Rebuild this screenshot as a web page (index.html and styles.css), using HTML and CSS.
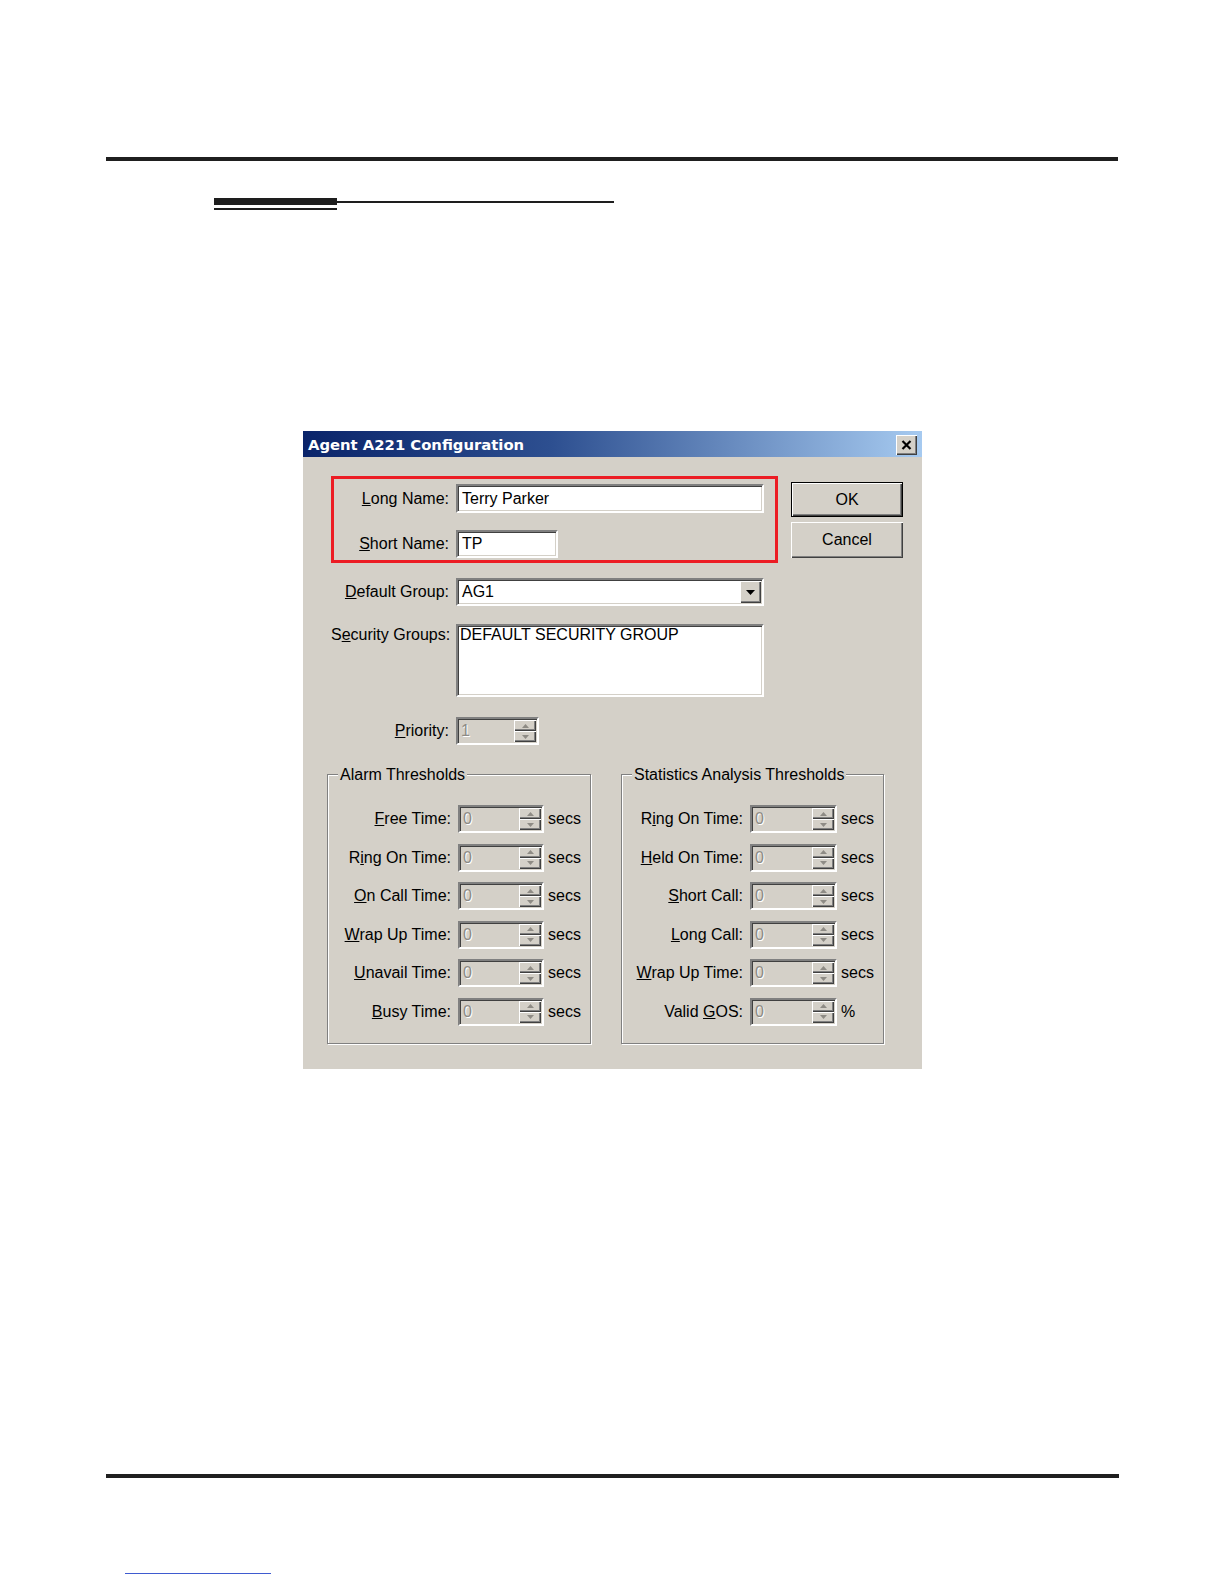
FILE: index.html
```html
<!DOCTYPE html>
<html>
<head>
<meta charset="utf-8">
<title>Agent A221 Configuration</title>
<link rel="stylesheet" href="styles.css">
</head>
<body>
<div class="page">
  <div class="rule-top"></div>
  <div class="heading-rule"><div class="hr-left"></div><div class="hr-right"></div></div>

  <div class="dialog">
    <div class="titlebar">
      <span class="title">Agent A221 Configuration</span>
      <span class="close"><svg width="11" height="10" viewBox="0 0 11 10"><path d="M1.5 1 L9.5 9 M9.5 1 L1.5 9" stroke="#000" stroke-width="2.2" fill="none"/></svg></span>
    </div>
    <div class="dlg-body">
      <div class="top-row">
        <div class="red-box">
          <div class="frow in-red"><label><u>L</u>ong Name:</label><div class="edit long">Terry Parker</div></div>
          <div class="frow in-red r2"><label><u>S</u>hort Name:</label><div class="edit short">TP</div></div>
        </div>
        <div class="btns">
          <div class="btn default">OK</div>
          <div class="btn">Cancel</div>
        </div>
      </div>

      <div class="frow out r-default"><label><u>D</u>efault Group:</label>
        <div class="combo"><span class="combo-val">AG1</span><span class="combo-btn"><svg width="9" height="5" viewBox="0 0 9 5"><polygon points="0,0 9,0 4.5,5" fill="#000"/></svg></span></div>
      </div>

      <div class="frow out r-sec"><label>S<u>e</u>curity Groups:</label>
        <div class="listbox">DEFAULT SECURITY GROUP</div>
      </div>

      <div class="frow out r-pri"><label><u>P</u>riority:</label>
        <div class="spin pri"><span class="sv">1</span><span class="sb"><span class="sbtn"><svg width="7" height="4" viewBox="0 0 7 4"><polygon points="0,4 3.5,0 7,4"/></svg></span><span class="sbtn"><svg width="7" height="4" viewBox="0 0 7 4"><polygon points="0,0 7,0 3.5,4"/></svg></span></span></div>
      </div>

      <div class="groups">
        <div class="group alarm">
          <span class="legend">Alarm Thresholds</span>
          <div class="grows">
            <label><u>F</u>ree Time:</label>
            <div class="spin"><span class="sv">0</span><span class="sb"><span class="sbtn"><svg width="7" height="4" viewBox="0 0 7 4"><polygon points="0,4 3.5,0 7,4"/></svg></span><span class="sbtn"><svg width="7" height="4" viewBox="0 0 7 4"><polygon points="0,0 7,0 3.5,4"/></svg></span></span></div>
            <span class="unit">secs</span>

            <label>R<u>i</u>ng On Time:</label>
            <div class="spin"><span class="sv">0</span><span class="sb"><span class="sbtn"><svg width="7" height="4" viewBox="0 0 7 4"><polygon points="0,4 3.5,0 7,4"/></svg></span><span class="sbtn"><svg width="7" height="4" viewBox="0 0 7 4"><polygon points="0,0 7,0 3.5,4"/></svg></span></span></div>
            <span class="unit">secs</span>

            <label><u>O</u>n Call Time:</label>
            <div class="spin"><span class="sv">0</span><span class="sb"><span class="sbtn"><svg width="7" height="4" viewBox="0 0 7 4"><polygon points="0,4 3.5,0 7,4"/></svg></span><span class="sbtn"><svg width="7" height="4" viewBox="0 0 7 4"><polygon points="0,0 7,0 3.5,4"/></svg></span></span></div>
            <span class="unit">secs</span>

            <label><u>W</u>rap Up Time:</label>
            <div class="spin"><span class="sv">0</span><span class="sb"><span class="sbtn"><svg width="7" height="4" viewBox="0 0 7 4"><polygon points="0,4 3.5,0 7,4"/></svg></span><span class="sbtn"><svg width="7" height="4" viewBox="0 0 7 4"><polygon points="0,0 7,0 3.5,4"/></svg></span></span></div>
            <span class="unit">secs</span>

            <label><u>U</u>navail Time:</label>
            <div class="spin"><span class="sv">0</span><span class="sb"><span class="sbtn"><svg width="7" height="4" viewBox="0 0 7 4"><polygon points="0,4 3.5,0 7,4"/></svg></span><span class="sbtn"><svg width="7" height="4" viewBox="0 0 7 4"><polygon points="0,0 7,0 3.5,4"/></svg></span></span></div>
            <span class="unit">secs</span>

            <label><u>B</u>usy Time:</label>
            <div class="spin"><span class="sv">0</span><span class="sb"><span class="sbtn"><svg width="7" height="4" viewBox="0 0 7 4"><polygon points="0,4 3.5,0 7,4"/></svg></span><span class="sbtn"><svg width="7" height="4" viewBox="0 0 7 4"><polygon points="0,0 7,0 3.5,4"/></svg></span></span></div>
            <span class="unit">secs</span>
          </div>
        </div>

        <div class="group stats">
          <span class="legend">Statistics Analysis Thresholds</span>
          <div class="grows">
            <label>R<u>i</u>ng On Time:</label>
            <div class="spin"><span class="sv">0</span><span class="sb"><span class="sbtn"><svg width="7" height="4" viewBox="0 0 7 4"><polygon points="0,4 3.5,0 7,4"/></svg></span><span class="sbtn"><svg width="7" height="4" viewBox="0 0 7 4"><polygon points="0,0 7,0 3.5,4"/></svg></span></span></div>
            <span class="unit">secs</span>

            <label><u>H</u>eld On Time:</label>
            <div class="spin"><span class="sv">0</span><span class="sb"><span class="sbtn"><svg width="7" height="4" viewBox="0 0 7 4"><polygon points="0,4 3.5,0 7,4"/></svg></span><span class="sbtn"><svg width="7" height="4" viewBox="0 0 7 4"><polygon points="0,0 7,0 3.5,4"/></svg></span></span></div>
            <span class="unit">secs</span>

            <label><u>S</u>hort Call:</label>
            <div class="spin"><span class="sv">0</span><span class="sb"><span class="sbtn"><svg width="7" height="4" viewBox="0 0 7 4"><polygon points="0,4 3.5,0 7,4"/></svg></span><span class="sbtn"><svg width="7" height="4" viewBox="0 0 7 4"><polygon points="0,0 7,0 3.5,4"/></svg></span></span></div>
            <span class="unit">secs</span>

            <label><u>L</u>ong Call:</label>
            <div class="spin"><span class="sv">0</span><span class="sb"><span class="sbtn"><svg width="7" height="4" viewBox="0 0 7 4"><polygon points="0,4 3.5,0 7,4"/></svg></span><span class="sbtn"><svg width="7" height="4" viewBox="0 0 7 4"><polygon points="0,0 7,0 3.5,4"/></svg></span></span></div>
            <span class="unit">secs</span>

            <label><u>W</u>rap Up Time:</label>
            <div class="spin"><span class="sv">0</span><span class="sb"><span class="sbtn"><svg width="7" height="4" viewBox="0 0 7 4"><polygon points="0,4 3.5,0 7,4"/></svg></span><span class="sbtn"><svg width="7" height="4" viewBox="0 0 7 4"><polygon points="0,0 7,0 3.5,4"/></svg></span></span></div>
            <span class="unit">secs</span>

            <label>Valid <u>G</u>OS:</label>
            <div class="spin"><span class="sv">0</span><span class="sb"><span class="sbtn"><svg width="7" height="4" viewBox="0 0 7 4"><polygon points="0,4 3.5,0 7,4"/></svg></span><span class="sbtn"><svg width="7" height="4" viewBox="0 0 7 4"><polygon points="0,0 7,0 3.5,4"/></svg></span></span></div>
            <span class="unit">%</span>
          </div>
        </div>
      </div>
    </div>
  </div>

  <div class="rule-bottom"></div>
  <div class="link-line"></div>
</div>
</body>
</html>
```

FILE: styles.css
```css
html, body {
  margin: 0;
  padding: 0;
  background: #fff;
}

body {
  font-family: "Liberation Sans", Arial, sans-serif;
  font-size: 16px;
  color: #000;
}

.page {
  width: 1224px;
  height: 1584px;
  overflow: hidden;
}

.rule-top {
  margin: 157px 0 0 106px;
  width: 1012px;
  height: 4px;
  background: #1f1f1f;
}

.heading-rule {
  display: flex;
  align-items: flex-start;
  margin: 37px 0 0 214px;
}

.hr-left {
  width: 123px;
  height: 12px;
  background: linear-gradient(#1e1e1e 0 7px, transparent 7px 10px, #1e1e1e 10px 12px);
}

.hr-right {
  width: 277px;
  height: 2px;
  margin-top: 3px;
  background: #1e1e1e;
}

/* dialog */
.dialog {
  margin: 221px 0 0 303px;
  width: 619px;
  height: 638px;
  background: #d4d0c8;
  overflow: hidden;
}

.titlebar {
  height: 26px;
  display: flex;
  align-items: center;
  justify-content: space-between;
  padding: 0 5px;
  background: linear-gradient(to right, #0a246a 0%, #2d4f90 40%, #a6caf0 100%);
}

.title {
  color: #fff;
  font-family: "DejaVu Sans", Verdana, sans-serif;
  font-weight: bold;
  font-size: 14.8px;
}

.close {
  align-self: flex-start;
  margin-top: 4px;
  width: 21px;
  height: 20px;
  box-sizing: border-box;
  background: #d4d0c8;
  box-shadow: inset 1px 1px 0 #fff, inset -1px -1px 0 #404040, inset -2px -2px 0 #808080;
  display: flex;
  align-items: center;
  justify-content: center;
}

.dlg-body {
  padding: 19px 0 0 28px;
}

.top-row {
  display: flex;
  align-items: flex-start;
}

.red-box {
  width: 447px;
  box-sizing: border-box;
  border: 3px solid #ec1c24;
  padding: 5px 11px 2px 0;
}

.frow {
  display: flex;
  align-items: center;
}

.frow label,
.grows label {
  text-align: right;
  white-space: nowrap;
  line-height: 18px;
}

.frow label {
  flex: none;
  margin-right: 7px;
}

.in-red label { width: 115px; }
.out label { width: 118px; }

.r2 { margin-top: 17px; }

.edit {
  box-sizing: border-box;
  background: #fff;
  border: 2px solid;
  border-color: #808080 #fff #fff #808080;
  box-shadow: inset 1px 1px 0 #404040, inset -1px -1px 0 #d4d0c8;
  padding: 0 4px;
  display: flex;
  align-items: center;
  white-space: nowrap;
}

.long { width: 308px; height: 29px; }
.short { width: 102px; height: 28px; }

.btns {
  margin: 6px 0 0 13px;
  display: flex;
  flex-direction: column;
  gap: 5px;
}

.btn {
  width: 112px;
  height: 36px;
  box-sizing: border-box;
  background: #d4d0c8;
  display: flex;
  align-items: center;
  justify-content: center;
  box-shadow: inset 1px 1px 0 #fff, inset -1px -1px 0 #404040, inset -2px -2px 0 #808080;
}

.btn.default {
  height: 35px;
  border: 1px solid #000;
}

.r-default { margin-top: 15px; }

.combo {
  width: 308px;
  height: 28px;
  box-sizing: border-box;
  background: #fff;
  border: 2px solid;
  border-color: #808080 #fff #fff #808080;
  box-shadow: inset 1px 1px 0 #404040, inset -1px -1px 0 #d4d0c8;
  display: flex;
  align-items: center;
  justify-content: space-between;
  padding: 1px 1px 1px 4px;
}

.combo-btn {
  width: 21px;
  height: 22px;
  box-sizing: border-box;
  background: #d4d0c8;
  box-shadow: inset 1px 1px 0 #fff, inset -1px -1px 0 #404040, inset -2px -2px 0 #808080;
  display: flex;
  align-items: center;
  justify-content: center;
}

.r-sec {
  margin-top: 18px;
  align-items: flex-start;
}

.r-sec label { margin-top: 2px; }

.listbox {
  width: 308px;
  height: 73px;
  box-sizing: border-box;
  background: #fff;
  border: 2px solid;
  border-color: #808080 #fff #fff #808080;
  box-shadow: inset 1px 1px 0 #404040, inset -1px -1px 0 #d4d0c8;
  padding: 0 2px;
  line-height: 18px;
  white-space: nowrap;
}

.r-pri { margin-top: 20px; }

/* spin edit (disabled) */
.spin {
  width: 86px;
  height: 28px;
  box-sizing: border-box;
  display: flex;
  background: #d4d0c8;
  border: 2px solid;
  border-color: #808080 #fff #fff #808080;
  box-shadow: inset 1px 1px 0 #404040, inset -1px -1px 0 #d4d0c8;
  padding: 1px 1px 1px 0;
}

.spin.pri { width: 83px; }

.sv {
  flex: 1;
  padding-left: 3px;
  color: #8e8b85;
  text-shadow: 1px 1px 0 #fff;
  display: flex;
  align-items: center;
}

.sb {
  width: 22px;
  display: flex;
  flex-direction: column;
}

.sbtn {
  flex: 1;
  background: #d4d0c8;
  box-shadow: inset 1px 1px 0 #fff, inset -1px -1px 0 #404040, inset -2px -2px 0 #808080;
  display: flex;
  align-items: center;
  justify-content: center;
}

.sbtn svg {
  fill: #8e8b85;
}

/* group boxes */
.groups {
  display: flex;
  gap: 30px;
  margin: 29px 0 0 -4px;
}

.group {
  height: 270px;
  box-sizing: border-box;
  border: 1px solid #808080;
  box-shadow: inset 1px 1px 0 #fff, 1px 1px 0 #fff;
}

.alarm { width: 264px; }
.stats { width: 263px; }

.legend {
  display: block;
  width: max-content;
  margin: -9px 0 0 10px;
  padding: 0 2px;
  background: #d4d0c8;
  line-height: 18px;
}

.grows {
  display: grid;
  grid-template-columns: 123px 86px auto;
  grid-auto-rows: 28px;
  column-gap: 7px;
  row-gap: 10.6px;
  margin-top: 21px;
  align-items: center;
}

.stats .grows {
  grid-template-columns: 121px 87px auto;
}

.stats .spin { width: 87px; }

.unit {
  margin-left: -3px;
  line-height: 18px;
}

.rule-bottom {
  margin: 405px 0 0 106px;
  width: 1013px;
  height: 4px;
  background: #1f1f1f;
}

.link-line {
  margin: 95px 0 0 125px;
  width: 146px;
  height: 1px;
  background: #3f5bd0;
}
```
